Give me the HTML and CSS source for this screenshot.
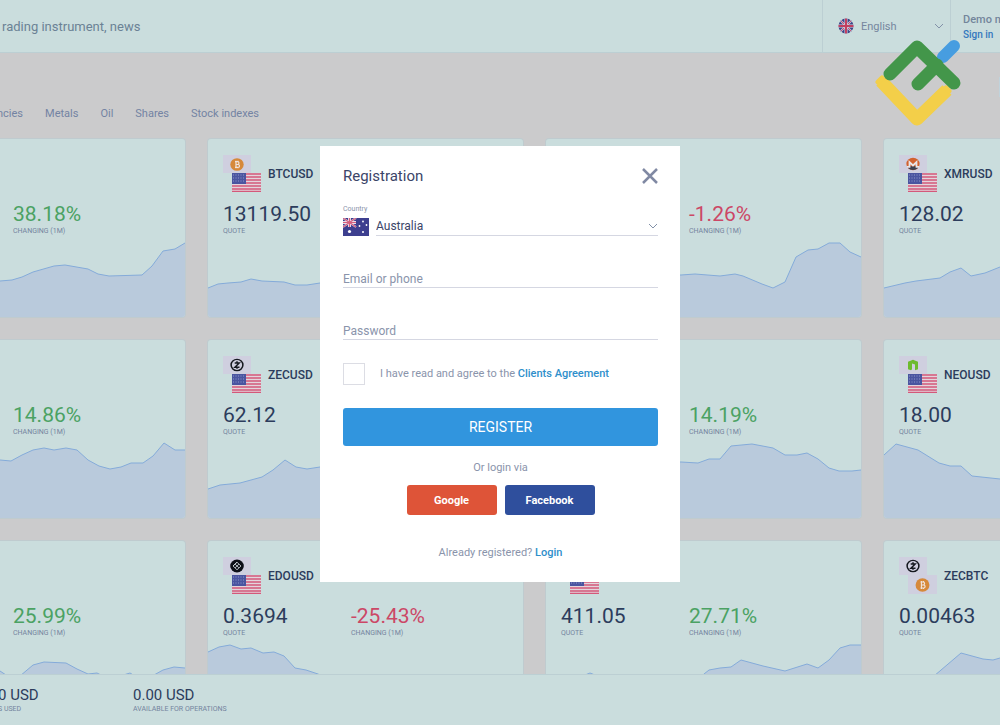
FILE: index.html
```html
<!DOCTYPE html>
<html lang="en">
<head>
  <meta charset="UTF-8">
  <meta name="viewport" content="width=device-width, initial-scale=1.0">
  <title>Registration</title>
  <link rel="stylesheet" href="styles.css">
</head>
<body>

  <!-- Shared icons -->
  <svg class="sprite" aria-hidden="true">
    <symbol id="us" viewBox="0 0 29 19">
      <rect width="29" height="19" fill="#e3d5dc"/>
      <path d="M0 1h29M0 4h29M0 7h29M0 10h29M0 13h29M0 16h29M0 18.5h29" stroke="#d4587a" stroke-width="1.5"/>
      <rect width="14" height="11" fill="#4a55a0"/>
      <path d="M1 2h12M1 5h12M1 8h12" stroke="#8f97c9" stroke-dasharray="1 1.5"/>
    </symbol>
    <symbol id="btc" viewBox="0 0 28 19" preserveAspectRatio="none">
      <rect width="28" height="19" fill="#cfcfdf"/>
      <circle cx="14" cy="10" r="6.7" fill="#d6893a"/>
      <path d="M12 7h2.5a1.5 1.5 0 0 1 0 3H12.5M12.5 10h2.500a1.5 1.5 0 0 1 0 3H12M13 6v8M15 6v1M15 13v1" fill="none" stroke="#f0e4dc" stroke-width="1.2"/>
    </symbol>
    <symbol id="zec" viewBox="0 0 28 19" preserveAspectRatio="none">
      <rect width="28" height="19" fill="#cfcfdf"/>
      <circle cx="14" cy="9.5" r="5.9" fill="none" stroke="#15181f" stroke-width="1.5"/>
      <path d="M11.7 7.3h4.5l-4.3 4.5h4.6M14 5.5v2M14 11.5v2" fill="none" stroke="#15181f" stroke-width="1.5"/>
    </symbol>
    <symbol id="edo" viewBox="0 0 28 19" preserveAspectRatio="none">
      <rect width="28" height="19" fill="#cfcfdf"/>
      <circle cx="14" cy="9.5" r="6.8" fill="#0d1018"/>
      <path d="M10 9.5l4-4 4 4-4 4zM12 7.5l4 4M14 5.5l-4 4M16 7.5l-4 4" fill="none" stroke="#d5dde2" stroke-width=".8"/>
    </symbol>
    <symbol id="xmr" viewBox="0 0 28 19" preserveAspectRatio="none">
      <rect width="28" height="19" fill="#cfcfdf"/>
      <circle cx="14" cy="9.5" r="6.6" fill="#d2622f"/>
      <path d="M8 12h12a6.6 6.6 0 0 1-12 0z" fill="#3c4150"/>
      <path d="M8 12.5h2.5V7.5l3.5 3.5 3.5-3.5v5H20" fill="none" stroke="#e8e4e6" stroke-width="1.8"/>
    </symbol>
    <symbol id="neo" viewBox="0 0 28 19" preserveAspectRatio="none">
      <rect width="28" height="19" fill="#cfcfdf"/>
      <path d="M9 6l5-2 5 2v8l-3 1V9l-3-1v6l-1 1-3-1z" fill="#6dbb2f"/>
    </symbol>
    <symbol id="chevron" viewBox="0 0 10 6">
      <path d="M1 1l4 4 4-4" fill="none" stroke="currentColor"/>
    </symbol>
  </svg>

  <!-- Top bar -->
  <header class="topbar">
    <input type="text" class="search" placeholder="rading instrument, news" aria-label="Search">
    <div class="language">
      <svg class="language-flag" viewBox="0 0 16 16">
        <clipPath id="round"><circle cx="8" cy="8" r="7.5"/></clipPath>
        <g clip-path="url(#round)">
          <rect width="16" height="16" fill="#3d4687"/>
          <path d="M0 0l16 16M16 0L0 16" stroke="#c3c6dc" stroke-width="2"/>
          <path d="M0 0l16 16M16 0L0 16" stroke="#c65270"/>
          <path d="M8 0v16M0 8h16" stroke="#d9dbe6" stroke-width="3"/>
          <path d="M8 0v16M0 8h16" stroke="#c23f60" stroke-width="2"/>
        </g>
      </svg>
      <select class="language-select" aria-label="Language">
        <option>English</option>
      </select>
      <svg class="chevron"><use href="#chevron"/></svg>
    </div>
    <div class="account">
      <span class="account-mode">Demo m</span>
      <a href="#" class="account-link">Sign in</a>
    </div>
  </header>

  <!-- Instruments -->
  <main class="content">
    <div class="tools"><span class="tools-box"></span></div>
    <nav class="tabs">
      <a href="#">ncies</a>
      <a href="#">Metals</a>
      <a href="#">Oil</a>
      <a href="#">Shares</a>
      <a href="#">Stock indexes</a>
    </nav>

    <div class="cards">
      <article class="card">
        <div class="pair"></div>
        <div class="stats">
          <div class="stat change"><strong class="up">38.18%</strong><span>CHANGING (1M)</span></div>
        </div>
        <svg class="chart" viewBox="0 0 315 100" preserveAspectRatio="none">
          <path d="M0 70L130 64 142 63 152 60 163 55 184 49 195 48 218 52 228 57 239 59 272 58 282 49 293 34 305 32 315 26 320 26V110H-5V70z"/>
        </svg>
      </article>
      <article class="card">
        <div class="pair">
          <div class="flags"><svg class="coin"><use href="#btc"/></svg><svg class="flag"><use href="#us"/></svg></div>
          <h2>BTCUSD</h2>
        </div>
        <div class="stats">
          <div class="stat"><strong>13119.50</strong><span>QUOTE</span></div>
        </div>
        <svg class="chart" viewBox="0 0 315 100" preserveAspectRatio="none">
          <path d="M0 71L10 67 20 66 33 65 43 62 54 64 76 65 87 68 99 68 112 66 315 60 320 60V110H-5V71z"/>
        </svg>
      </article>
      <article class="card">
        <div class="pair"></div>
        <div class="stats">
          <div class="stat change"><strong class="down">-1.26%</strong><span>CHANGING (1M)</span></div>
        </div>
        <svg class="chart" viewBox="0 0 315 100" preserveAspectRatio="none">
          <path d="M0 60L135 58 149 57 174 59 189 57 197 59 216 67 227 71 239 65 250 40 262 33 272 32 283 26 294 26 304 35 315 40 320 40V110H-5V60z"/>
        </svg>
      </article>
      <article class="card">
        <div class="pair">
          <div class="flags"><svg class="coin"><use href="#xmr"/></svg><svg class="flag"><use href="#us"/></svg></div>
          <h2>XMRUSD</h2>
        </div>
        <div class="stats">
          <div class="stat"><strong>128.02</strong><span>QUOTE</span></div>
        </div>
        <svg class="chart" viewBox="0 0 315 100" preserveAspectRatio="none">
          <path d="M0 71L21 66 32 64 56 61 66 55 77 51 87 59 101 56 116 50 315 40 320 40V110H-5V71z"/>
        </svg>
      </article>

      <article class="card">
        <div class="pair"></div>
        <div class="stats">
          <div class="stat change"><strong class="up">14.86%</strong><span>CHANGING (1M)</span></div>
        </div>
        <svg class="chart" viewBox="0 0 315 100" preserveAspectRatio="none">
          <path d="M0 50L130 42 141 43 152 37 163 32 174 30 184 32 196 30 207 32 218 42 229 48 240 51 251 49 261 45 273 45 283 38 294 25 305 32 315 32 320 32V110H-5V50z"/>
        </svg>
      </article>
      <article class="card">
        <div class="pair">
          <div class="flags"><svg class="coin"><use href="#zec"/></svg><svg class="flag"><use href="#us"/></svg></div>
          <h2>ZECUSD</h2>
        </div>
        <div class="stats">
          <div class="stat"><strong>62.12</strong><span>QUOTE</span></div>
        </div>
        <svg class="chart" viewBox="0 0 315 100" preserveAspectRatio="none">
          <path d="M0 71L12 67 32 65 43 62 54 59 65 52 77 42 88 49 99 51 112 49 315 45 320 45V110H-5V71z"/>
        </svg>
      </article>
      <article class="card">
        <div class="pair"></div>
        <div class="stats">
          <div class="stat change"><strong class="up">14.19%</strong><span>CHANGING (1M)</span></div>
        </div>
        <svg class="chart" viewBox="0 0 315 100" preserveAspectRatio="none">
          <path d="M0 50L135 44 152 45 163 41 174 41 185 28 206 26 227 30 239 37 251 37 261 35 272 41 283 50 293 53 306 53 315 52 320 52V110H-5V50z"/>
        </svg>
      </article>
      <article class="card">
        <div class="pair">
          <div class="flags"><svg class="coin"><use href="#neo"/></svg><svg class="flag"><use href="#us"/></svg></div>
          <h2>NEOUSD</h2>
        </div>
        <div class="stats">
          <div class="stat"><strong>18.00</strong><span>QUOTE</span></div>
        </div>
        <svg class="chart" viewBox="0 0 315 100" preserveAspectRatio="none">
          <path d="M0 37L12 26 34 32 55 45 66 48 77 48 88 58 116 61 315 65 320 65V110H-5V37z"/>
        </svg>
      </article>

      <article class="card">
        <div class="pair"></div>
        <div class="stats">
          <div class="stat change"><strong class="up">25.99%</strong><span>CHANGING (1M)</span></div>
        </div>
        <svg class="chart" viewBox="0 0 315 100" preserveAspectRatio="none">
          <path d="M0 50L130 52 136 56 150 57 163 46 174 43 196 44 207 50 218 55 227 54 233 57 250 57 260 54 265 57 284 56 293 51 304 48 315 49 320 49V110H-5V50z"/>
        </svg>
      </article>
      <article class="card">
        <div class="pair">
          <div class="flags"><svg class="coin"><use href="#edo"/></svg><svg class="flag"><use href="#us"/></svg></div>
          <h2>EDOUSD</h2>
        </div>
        <div class="stats">
          <div class="stat"><strong>0.3694</strong><span>QUOTE</span></div>
          <div class="stat change"><strong class="down">-25.43%</strong><span>CHANGING (1M)</span></div>
        </div>
        <svg class="chart" viewBox="0 0 315 100" preserveAspectRatio="none">
          <path d="M0 33L11 28 22 26 33 30 43 29 55 34 66 33 76 37 87 49 98 51 110 55 120 60 315 70 320 70V110H-5V33z"/>
        </svg>
      </article>
      <article class="card">
        <div class="pair">
          <div class="flags"><svg class="coin"></svg><svg class="flag"><use href="#us"/></svg></div>
        </div>
        <div class="stats">
          <div class="stat"><strong>411.05</strong><span>QUOTE</span></div>
          <div class="stat change"><strong class="up">27.71%</strong><span>CHANGING (1M)</span></div>
        </div>
        <svg class="chart" viewBox="0 0 315 100" preserveAspectRatio="none">
          <path d="M0 62L34 58 44 54 54 58 150 62 158 55 163 51 174 49 185 48 195 41 217 47 239 52 261 45 272 49 283 41 294 29 304 26 315 26 320 26V110H-5V62z"/>
        </svg>
      </article>
      <article class="card">
        <div class="pair">
          <div class="flags"><svg class="coin"><use href="#zec"/></svg><svg class="flag"><use href="#btc"/></svg></div>
          <h2>ZECBTC</h2>
        </div>
        <div class="stats">
          <div class="stat"><strong>0.00463</strong><span>QUOTE</span></div>
        </div>
        <svg class="chart" viewBox="0 0 315 100" preserveAspectRatio="none">
          <path d="M0 66L50 57 77 34 99 40 109 41 116 39 315 30 320 30V110H-5V66z"/>
        </svg>
      </article>
    </div>
  </main>

  <!-- Account summary -->
  <footer class="summary">
    <div class="total used"><strong>0 USD</strong><span>S USED</span></div>
    <div class="total"><strong>0.00 USD</strong><span>AVAILABLE FOR OPERATIONS</span></div>
  </footer>

  <!-- Brand mark over the page -->
  <svg class="logo" viewBox="0 0 88 90">
    <path d="M68 19L79 8" stroke="#479de0" stroke-width="12" stroke-linecap="round"/>
    <path d="M6 43L42 81 72 52" stroke="#f3cf49" stroke-width="13" stroke-linejoin="round"/>
    <path d="M3 44L7 40M71 50L74 53" stroke="#f3cf49" stroke-width="5" stroke-linecap="round"/>
    <path d="M15 36L42 9 79 45M43 46L62 27" stroke="#43964a" stroke-width="13" stroke-linecap="round" stroke-linejoin="round"/>
  </svg>

  <!-- Registration form -->
  <div class="overlay">
    <form class="dialog">
      <div class="dialog-head">
        <h1>Registration</h1>
        <button type="button" class="close" aria-label="Close">
          <svg viewBox="0 0 16 16"><path d="M1 1l14 14M15 1L1 15" stroke="#8089a3" stroke-width="2.5"/></svg>
        </button>
      </div>

      <label for="country" class="country-label">Country</label>
      <div class="country">
        <svg class="country-flag" viewBox="0 0 26 18">
          <rect width="26" height="18" fill="#3d3f8f"/>
          <path d="M0 0l13 9M13 0L0 9" stroke="#dcd6ea" stroke-width="2"/>
          <path d="M6.5 0v9M0 4.5h13" stroke="#eadfea" stroke-width="3"/>
          <path d="M6.5 0v9M0 4.5h13M0 0l13 9M13 0L0 9" stroke="#d4607f" stroke-width="1.2"/>
          <g fill="#fff"><circle cx="6.5" cy="13.5" r="1.6"/><circle cx="20" cy="3.5" r=".9"/><circle cx="16.5" cy="8" r=".9"/><circle cx="23.5" cy="7" r=".9"/><circle cx="20" cy="14" r="1"/></g>
        </svg>
        <div class="country-field">
          <select id="country">
            <option>Australia</option>
          </select>
          <svg class="chevron"><use href="#chevron"/></svg>
        </div>
      </div>

      <input type="text" class="field" placeholder="Email or phone" aria-label="Email or phone">
      <input type="password" class="field" placeholder="Password" aria-label="Password">

      <div class="agree">
        <input type="checkbox" id="agree">
        <label for="agree">I have read and agree to the <a href="#">Clients Agreement</a></label>
      </div>

      <button type="submit" class="register">REGISTER</button>

      <p class="via">Or login via</p>
      <div class="social">
        <button type="button" class="google">Google</button>
        <button type="button" class="facebook">Facebook</button>
      </div>

      <p class="login">Already registered? <a href="#">Login</a></p>
    </form>
  </div>

</body>
</html>
```
FILE: styles.css
```css
/* General Styles */
* {
  box-sizing: border-box;
}
body {
  margin: 0;
  height: 100vh;
  display: flex;
  flex-direction: column;
  overflow: hidden;
  background: #cbcbcc;
  color: #2c3c5c;
  font-family: Roboto, sans-serif;
  font-size: 11px;
}
h1, h2, p {
  margin: 0;
}
a {
  text-decoration: none;
}
button, input, select {
  font-family: inherit;
  border: none;
  border-radius: 0;
  outline: none;
}
select {
  appearance: none;
  background: none;
  padding: 0;
  flex: 1;
  min-width: 0;
}
.sprite {
  position: absolute;
  width: 0;
  height: 0;
}
.chevron {
  width: 10px;
  height: 6px;
  color: #8291a8;
  pointer-events: none;
}

/* Top bar */
.topbar {
  flex: none;
  height: 53px;
  display: flex;
  background: #cadddd;
  border-bottom: 1px solid #bccfd3;
}
.search {
  flex: 1;
  min-width: 0;
  padding: 0 2px;
  background: none;
  font-size: 13px;
}
.search::placeholder {
  color: #6b8295;
}
.language {
  width: 129px;
  padding: 0 6px 0 15px;
  display: flex;
  align-items: center;
  gap: 7px;
  border-left: 1px solid #bccfd3;
  border-right: 1px solid #bccfd3;
}
.language-flag {
  width: 16px;
  height: 16px;
}
.language-select {
  color: #75869e;
  font-size: 11px;
}
.account {
  width: 49px;
  padding: 12px 0 0 12px;
  display: flex;
  flex-direction: column;
  overflow: hidden;
  white-space: nowrap;
  line-height: 15px;
}
.account-mode {
  color: #73859b;
  font-weight: 500;
}
.account-link {
  color: #3478be;
  font-size: 10px;
  font-weight: 500;
}

/* Instruments */
.content {
  flex: 1;
  min-height: 0;
  overflow: hidden;
}
.tools {
  display: flex;
  justify-content: flex-end;
  height: 44px;
  padding-top: 24px;
}
.tools-box {
  width: 1px;
  background: #c0d3dc;
}
.tabs {
  display: flex;
  gap: 22px;
  margin-left: -3px;
  padding: 9px 0 18px;
  line-height: 15px;
}
.tabs a {
  color: #7383a3;
}
.cards {
  display: grid;
  grid-template-columns: repeat(4, 1fr);
  gap: 23px;
  margin: 0 -199px 0 -130px;
}
.card {
  position: relative;
  height: 178px;
  padding: 16px 15px;
  background: #cadddd;
  border-radius: 3px;
  box-shadow: 0 0 0 1px #bfcbcf;
  overflow: hidden;
}
.pair {
  display: flex;
  align-items: center;
  gap: 7px;
  height: 37px;
}
.pair h2 {
  font-size: 12px;
  font-weight: 500;
}
.flags {
  width: 38px;
  display: flex;
  flex-direction: column;
}
.coin {
  width: 28px;
  height: 18px;
}
.flag {
  width: 29px;
  height: 19px;
  align-self: flex-end;
}
.stats {
  display: grid;
  grid-template-columns: 128px 1fr;
  margin-top: 10px;
}
.stat, .total {
  display: flex;
  flex-direction: column;
}
.change {
  grid-column: 2;
}
.stat strong {
  font-size: 21px;
  font-weight: 400;
  line-height: 25px;
}
.stat span, .total span {
  color: #74849e;
  font-size: 7px;
  line-height: 8px;
}
.stat .up {
  color: #4ba263;
}
.stat .down {
  color: #cc4766;
}
.chart {
  position: absolute;
  left: 0;
  bottom: 0;
  width: 100%;
  height: 100px;
  fill: #b9cadc;
  stroke: #84abd9;
}

/* Account summary */
.summary {
  position: relative;
  flex: none;
  height: 51px;
  padding-top: 11px;
  display: flex;
  background: #cadddd;
  border-top: 1px solid #bccfd3;
}
.used {
  width: 135px;
  margin-left: -2px;
}
.total strong {
  font-size: 15px;
  font-weight: 400;
  line-height: 19px;
}

.logo {
  position: absolute;
  top: 38px;
  right: 37px;
  width: 88px;
  height: 90px;
  fill: none;
}

/* Registration form */
.overlay {
  position: fixed;
  inset: 0;
  padding-top: 3px;
  display: flex;
  align-items: center;
  justify-content: center;
}
.dialog {
  width: 360px;
  padding: 20px 22px 22px 23px;
  background: #fff;
  color: #8a94ab;
}
.dialog a {
  color: #2f8fcb;
  font-weight: 500;
}
.dialog-head {
  display: flex;
  justify-content: space-between;
  align-items: center;
  height: 20px;
}
.dialog-head h1 {
  color: #3b4568;
  font-size: 15px;
  font-weight: 400;
}
.close {
  width: 16px;
  height: 16px;
  padding: 0;
  background: none;
  cursor: pointer;
}
.close svg {
  display: block;
}
.country-label {
  display: block;
  margin-top: 19px;
  font-size: 7px;
  line-height: 9px;
}
.country {
  display: flex;
  gap: 7px;
  height: 22px;
  align-items: flex-end;
}
.country-flag {
  width: 26px;
  height: 18px;
}
.country-field {
  flex: 1;
  height: 22px;
  padding-top: 2px;
  display: flex;
  align-items: center;
  border-bottom: 1px solid #d5d7e2;
}
.country-field select {
  color: #3b4568;
  font-size: 12px;
}
.field {
  display: block;
  width: 100%;
  height: 20px;
  margin-top: 32px;
  padding: 2px 0 0;
  border-bottom: 1px solid #d5d7e2;
  font-size: 12px;
}
.field::placeholder {
  color: #8a94ab;
}
.agree {
  display: flex;
  align-items: center;
  gap: 15px;
  margin-top: 23px;
}
.agree input {
  appearance: none;
  width: 22px;
  height: 22px;
  margin: 0;
  border: 1px solid #dcdde4;
}
.agree label, .via, .login {
  font-size: 11px;
  line-height: 14px;
}
.register {
  width: 100%;
  height: 38px;
  margin-top: 23px;
  background: #3195de;
  border-radius: 3px;
  color: #fff;
  font-size: 14px;
  cursor: pointer;
}
.via {
  margin-top: 15px;
  text-align: center;
}
.social {
  display: flex;
  justify-content: center;
  gap: 8px;
  margin-top: 10px;
}
.social button {
  width: 90px;
  height: 30px;
  border-radius: 3px;
  color: #fff;
  font-size: 11px;
  font-weight: 700;
  cursor: pointer;
}
.social .google {
  background: #de5438;
}
.social .facebook {
  background: #2f4f9d;
}
.login {
  margin-top: 31px;
  text-align: center;
}
```
